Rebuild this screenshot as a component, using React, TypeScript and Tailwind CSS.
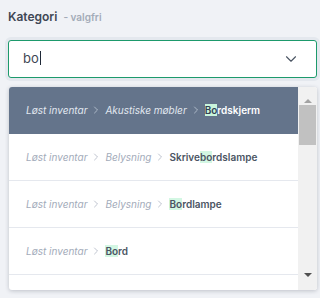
import { ChevronDown, ChevronRight } from "lucide-react";

const query = "bo";

const options = [
  { path: ["Løst inventar", "Akustiske møbler"], name: "Bordskjerm" },
  { path: ["Løst inventar", "Belysning"], name: "Skrivebordslampe" },
  { path: ["Løst inventar", "Belysning"], name: "Bordlampe" },
  { path: ["Løst inventar"], name: "Bord" },
];

function Highlight({ text, active }: { text: string; active: boolean }) {
  const i = text.toLowerCase().indexOf(query);
  if (i < 0) return <>{text}</>;
  return (
    <>
      {text.slice(0, i)}
      <span className={active ? "bg-[#c9f5dc] text-[#334155]" : "bg-[#d3f7e3]"}>
        {text.slice(i, i + query.length)}
      </span>
      {text.slice(i + query.length)}
    </>
  );
}

export default function App() {
  return (
    <div className="min-h-[298px] bg-[#f0f2f6] pl-2 pr-[3px] pt-[8px] font-['Inter',sans-serif]">
      <div className="flex items-baseline gap-[6px]">
        <span className="text-[12px] font-semibold text-[#3f4754]">Kategori</span>
        <span className="text-[10px] font-semibold text-[#a3abb8]">- valgfri</span>
      </div>
      <div className="relative mt-[14px]">
        <div className="flex h-[38px] items-center rounded-[3px] border-[1.5px] border-[#1d9a6c] bg-white pl-[14px] pr-[16px] ring-[3px] ring-[#e4e8ee]">
          <span className="flex-1 text-[13px] text-[#3f4754]">
            {query}
            <span className="ml-px inline-block h-[14px] w-px translate-y-[2px] bg-[#1f2937]" />
          </span>
          <ChevronDown size={18} strokeWidth={1.5} className="text-[#4b5563]" />
        </div>
        <div className="absolute left-px right-0 top-[47px] flex h-[203px] overflow-hidden rounded-[3px] bg-white shadow-[0_1px_4px_rgba(15,23,42,0.22)]">
          <div className="flex-1 overflow-hidden">
            {options.map((o, idx) => {
              const active = idx === 0;
              return (
                <div
                  key={o.name}
                  className={
                    "flex h-[47px] items-center px-[17px] text-[10px] border-b " +
                    (active ? "bg-[#64748b] border-[#64748b]" : "bg-white border-[#e5e8ee]")
                  }
                >
                  {o.path.map((p) => (
                    <span key={p} className="flex items-center">
                      <span className={"italic " + (active ? "text-[#e2e8f0]" : "text-[#a3abba]")}>{p}</span>
                      <ChevronRight
                        size={12}
                        strokeWidth={1.4}
                        className={"mx-[3px] " + (active ? "text-[#cbd5e1]" : "text-[#a3abba]")}
                      />
                    </span>
                  ))}
                  <span className={"font-semibold " + (active ? "text-white" : "text-[#4b5563]")}>
                    <Highlight text={o.name} active={active} />
                  </span>
                </div>
              );
            })}
          </div>
          <div className="flex w-[19px] flex-col items-center bg-[#f1f1f1]">
            <div className="flex h-[18px] items-end justify-center pb-[2px]">
              <div className="h-0 w-0 border-x-[4px] border-b-[4px] border-x-transparent border-b-[#a3a3a3]" />
            </div>
            <div className="h-[40px] w-[17px] bg-[#c1c1c1]" />
            <div className="flex-1" />
            <div className="flex h-[18px] items-start justify-center pt-[1px]">
              <div className="h-0 w-0 border-x-[4px] border-t-[4px] border-x-transparent border-t-[#505050]" />
            </div>
          </div>
        </div>
      </div>
    </div>
  );
}
